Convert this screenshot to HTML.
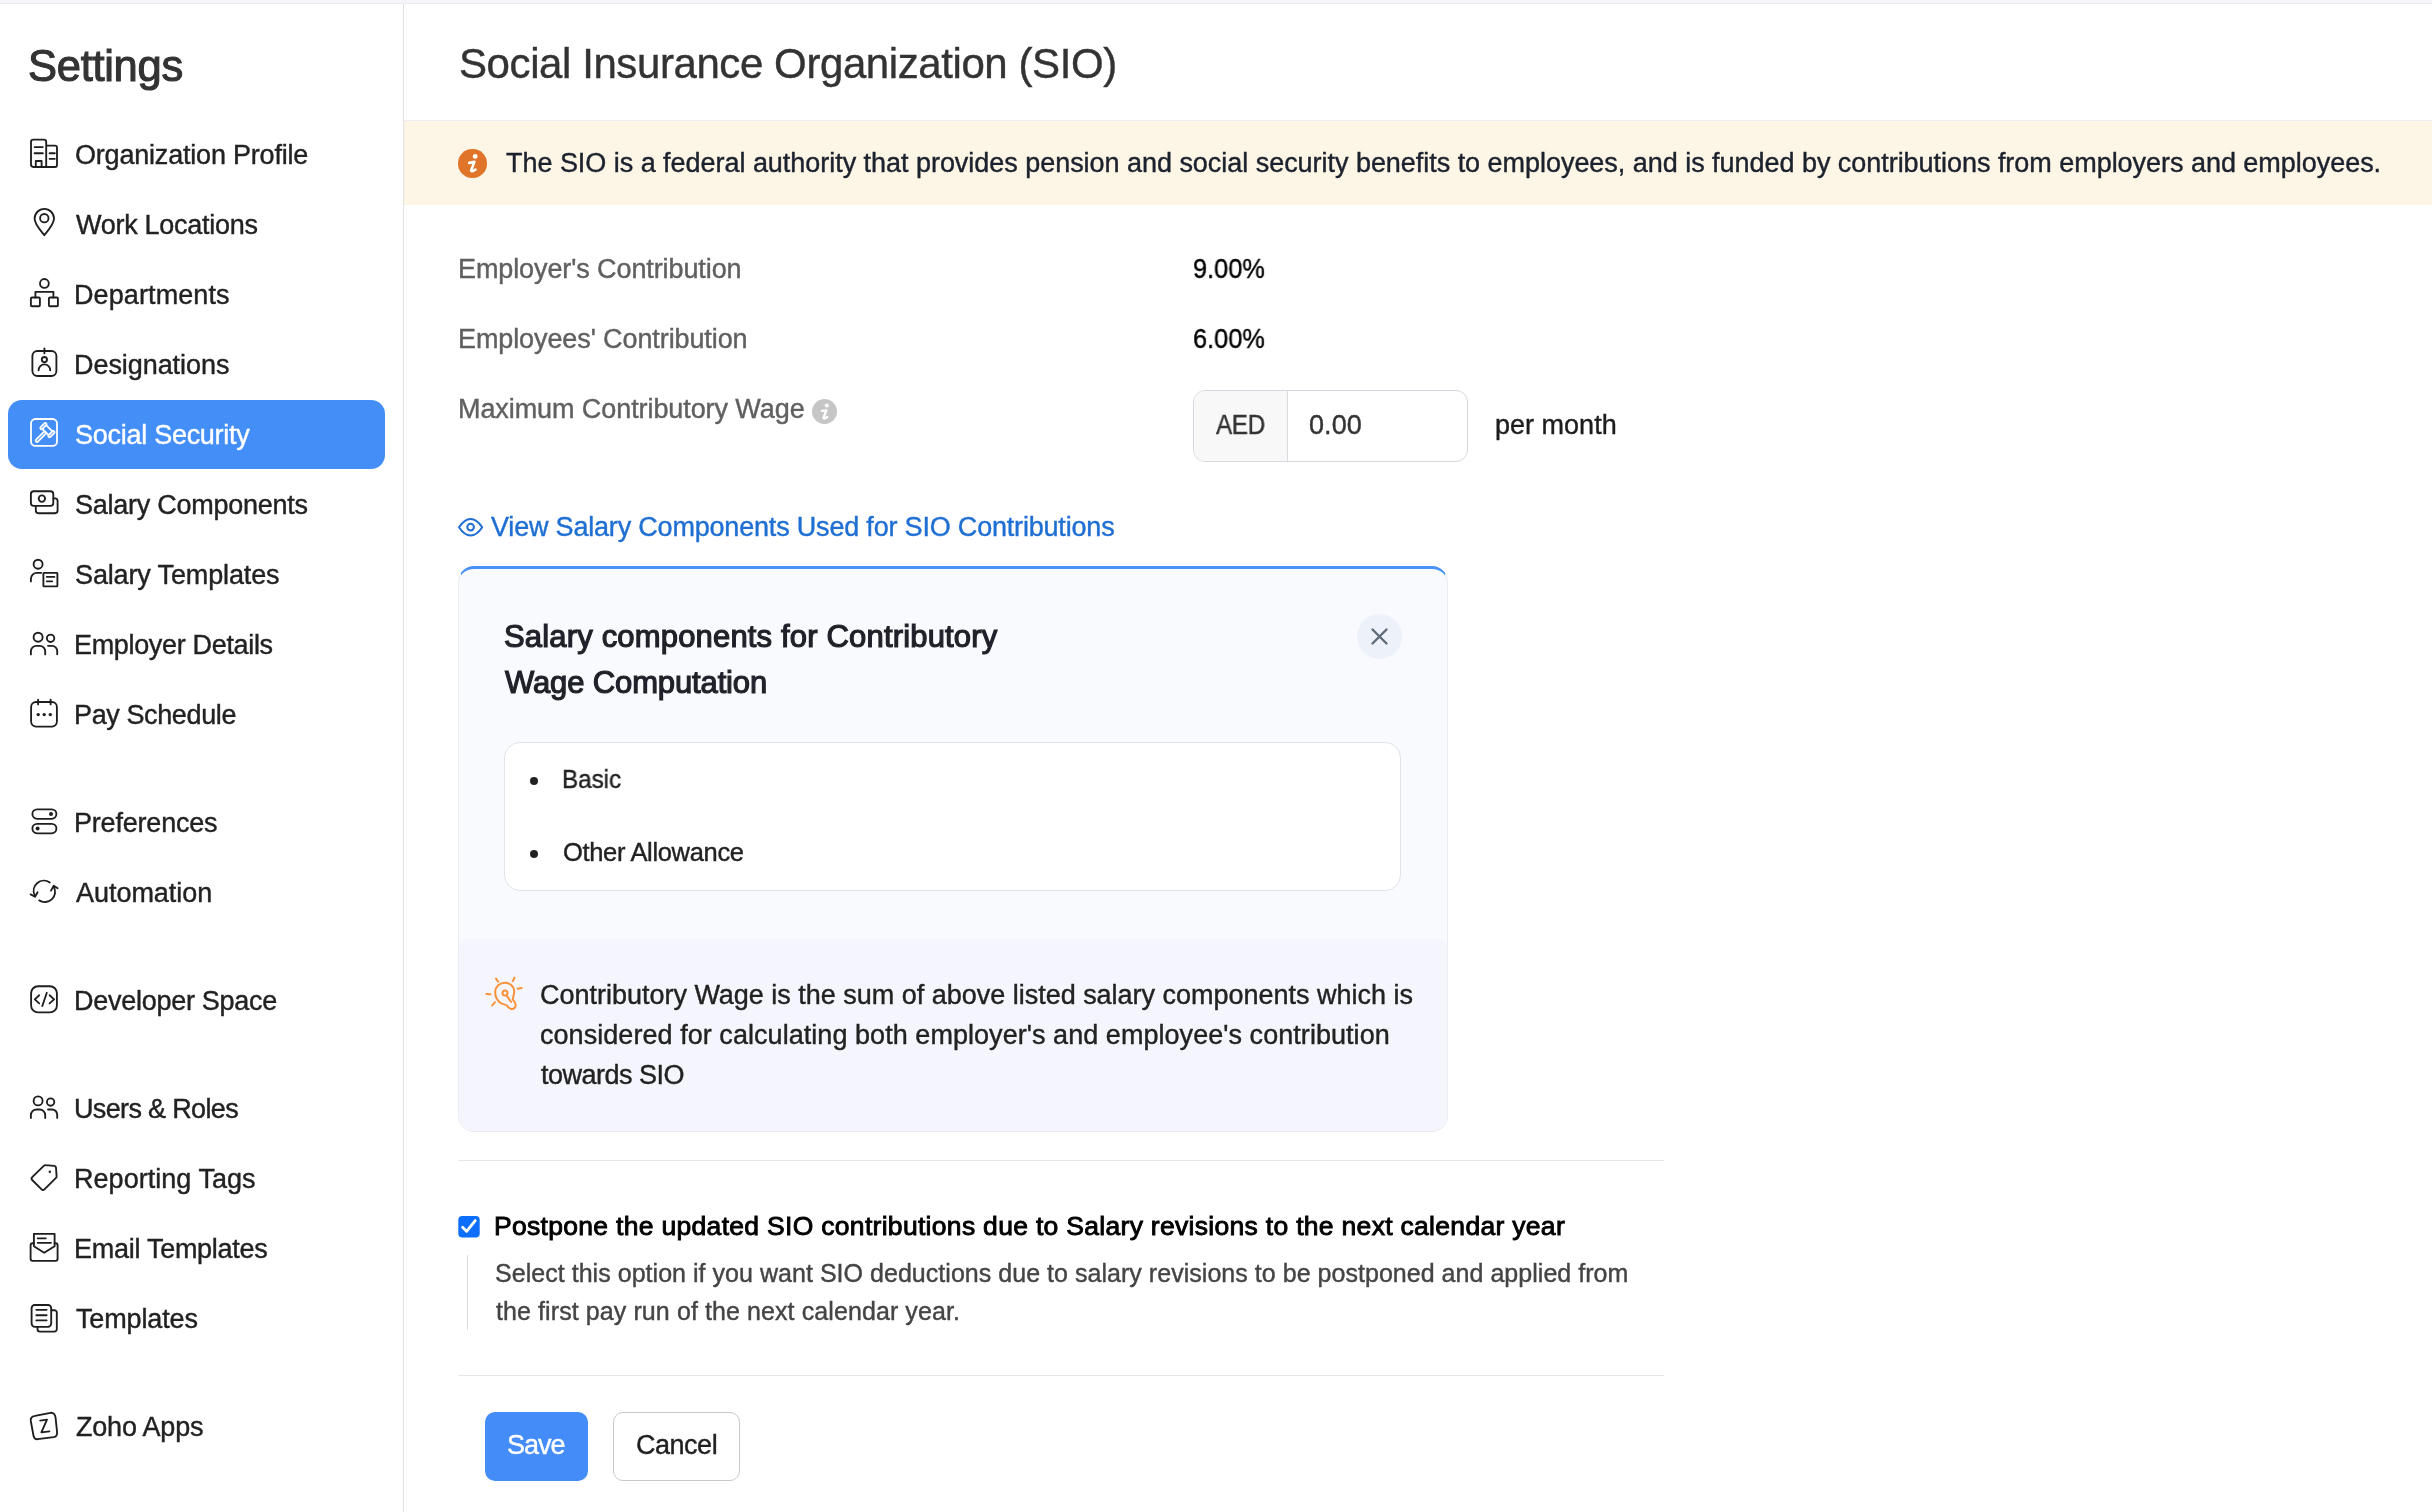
<!DOCTYPE html>
<html><head><meta charset="utf-8"><style>
html,body{margin:0;padding:0;}
body{width:2432px;height:1512px;overflow:hidden;background:#fff;position:relative;font-family:"Liberation Sans",sans-serif;}
@media (max-width:1300px){body{zoom:0.5}}
.t{position:absolute;white-space:pre;line-height:1;font-family:"Liberation Sans",sans-serif;-webkit-font-smoothing:antialiased;will-change:transform;}
</style></head><body>
<div style="position:absolute;left:0;top:0;width:2432px;height:3px;background:#f5f6fd"></div>
<div style="position:absolute;left:0;top:3px;width:2432px;height:1px;background:#ececec"></div>
<div style="position:absolute;left:403px;top:4px;width:1px;height:1508px;background:#e2e2e2"></div>
<div class="t" id="settings" style="left:27.50px;top:45.00px;font-size:43.5px;color:#333;letter-spacing:-0.285px;-webkit-text-stroke:1.1px #333;">Settings</div>
<div style="position:absolute;left:8px;top:400px;width:377px;height:69px;background:#448ef8;border-radius:14px"></div>
<div class="t" id="s_org" style="left:74.60px;top:141.80px;font-size:27px;color:#222;letter-spacing:-0.198px;-webkit-text-stroke:0.4px #222;">Organization Profile</div>
<div class="t" id="s_work" style="left:75.60px;top:211.80px;font-size:27px;color:#222;letter-spacing:-0.278px;-webkit-text-stroke:0.4px #222;">Work Locations</div>
<div class="t" id="s_dept" style="left:73.60px;top:281.80px;font-size:27px;color:#222;letter-spacing:0.1px;-webkit-text-stroke:0.4px #222;">Departments</div>
<div class="t" id="s_desig" style="left:73.60px;top:351.80px;font-size:27px;color:#222;letter-spacing:-0.065px;-webkit-text-stroke:0.4px #222;">Designations</div>
<div class="t" id="s_social" style="left:74.60px;top:421.80px;font-size:27px;color:#fff;letter-spacing:-0.27px;-webkit-text-stroke:0.4px #fff;">Social Security</div>
<div class="t" id="s_salc" style="left:74.60px;top:491.80px;font-size:27px;color:#222;letter-spacing:-0.262px;-webkit-text-stroke:0.4px #222;">Salary Components</div>
<div class="t" id="s_salt" style="left:74.60px;top:561.80px;font-size:27px;color:#222;letter-spacing:-0.133px;-webkit-text-stroke:0.4px #222;">Salary Templates</div>
<div class="t" id="s_emp" style="left:73.60px;top:631.80px;font-size:27px;color:#222;letter-spacing:-0.333px;-webkit-text-stroke:0.4px #222;">Employer Details</div>
<div class="t" id="s_pay" style="left:73.60px;top:701.80px;font-size:27px;color:#222;letter-spacing:-0.383px;-webkit-text-stroke:0.4px #222;">Pay Schedule</div>
<div class="t" id="s_pref" style="left:73.60px;top:809.50px;font-size:27px;color:#222;letter-spacing:-0.2px;-webkit-text-stroke:0.4px #222;">Preferences</div>
<div class="t" id="s_auto" style="left:75.60px;top:879.50px;font-size:27px;color:#222;letter-spacing:-0.032px;-webkit-text-stroke:0.4px #222;">Automation</div>
<div class="t" id="s_dev" style="left:73.60px;top:987.50px;font-size:27px;color:#222;letter-spacing:-0.273px;-webkit-text-stroke:0.4px #222;">Developer Space</div>
<div class="t" id="s_users" style="left:73.60px;top:1095.50px;font-size:27px;color:#222;letter-spacing:-0.657px;-webkit-text-stroke:0.4px #222;">Users &amp; Roles</div>
<div class="t" id="s_tags" style="left:73.60px;top:1165.50px;font-size:27px;color:#222;letter-spacing:0.032px;-webkit-text-stroke:0.4px #222;">Reporting Tags</div>
<div class="t" id="s_email" style="left:73.60px;top:1235.50px;font-size:27px;color:#222;letter-spacing:-0.27px;-webkit-text-stroke:0.4px #222;">Email Templates</div>
<div class="t" id="s_tmpl" style="left:75.60px;top:1305.50px;font-size:27px;color:#222;letter-spacing:-0.135px;-webkit-text-stroke:0.4px #222;">Templates</div>
<div class="t" id="s_zoho" style="left:75.60px;top:1413.50px;font-size:27px;color:#222;letter-spacing:-0.2px;-webkit-text-stroke:0.4px #222;">Zoho Apps</div>
<svg width="404" height="1512" viewBox="0 0 404 1512" style="position:absolute;left:0;top:0" fill="none" stroke="#1e1e1e" stroke-width="1.85" stroke-linecap="round" stroke-linejoin="round"><path d="M46.2 167 V142 a2.4 2.4 0 0 0 -2.4 -2.4 H33.4 a2.4 2.4 0 0 0 -2.4 2.4 V164.6 a2.4 2.4 0 0 0 2.4 2.4 H55 a2 2 0 0 0 2 -2 V147.6 a2 2 0 0 0 -2 -2 H46.2"/><path d="M34.6 147.1 H42.8 M34.6 153.2 H42.8 M49.6 153.2 H54.8 M49.6 158.8 H54.8"/><path d="M35.8 167 V161 H41.6 V167"/><path d="M44.3 235.2 C41 231 34.6 224.5 34.6 218.6 a9.7 9.7 0 0 1 19.4 0 C54 224.5 47.6 231 44.3 235.2 Z"/><circle cx="44.3" cy="218.2" r="4.2"/><circle cx="44.4" cy="283.4" r="4.4"/><path d="M35.4 297.4 V291.8 H53.4 V297.4"/><rect x="30.9" y="297.5" width="9" height="8.7" rx="1"/><rect x="48.9" y="297.5" width="9" height="8.7" rx="1"/><rect x="32.4" y="351" width="24" height="25" rx="5"/><path d="M44.4 348.4 V353.4"/><circle cx="44.4" cy="359.6" r="2.6"/><path d="M38.6 370.2 a5.8 5.8 0 0 1 11.6 0"/><rect x="30.9" y="491.2" width="22.4" height="14.6" rx="2.8"/><circle cx="41.9" cy="498.6" r="3.2"/><path d="M53.4 498.4 H55 a2.6 2.6 0 0 1 2.6 2.6 V510.6 a2.6 2.6 0 0 1 -2.6 2.6 H38.4 a2.6 2.6 0 0 1 -2.6 -2.6 V505.8"/><circle cx="38.1" cy="564.2" r="4.5"/><path d="M30.9 581.4 V578.8 a6 6 0 0 1 6 -6 H41.2"/><rect x="43.4" y="572.8" width="14" height="13.6" rx="0.6"/><path d="M46.8 576.9 H54.4 M46.8 581.3 H52.2"/><circle cx="38.1" cy="637.2" r="4.5"/><path d="M30.9 654.4 V651.4 a5.6 5.6 0 0 1 5.6 -5.6 H39.6 a5.6 5.6 0 0 1 5.6 5.6 V654.4"/><circle cx="50.6" cy="638.3" r="3.7"/><path d="M48 645.8 H52 a5.2 5.2 0 0 1 5.2 5.2 V654.2"/><rect x="31.1" y="702" width="25.8" height="24.6" rx="5"/><path d="M38.1 699.6 V704.4 M50.6 699.6 V704.4"/><g fill="#1e1e1e" stroke="none"><circle cx="38.2" cy="714.6" r="1.7"/><circle cx="44.2" cy="714.6" r="1.7"/><circle cx="50.3" cy="714.6" r="1.7"/></g><rect x="32.4" y="809.4" width="24" height="9.4" rx="4.7"/><rect x="32.4" y="823.9" width="24" height="9.4" rx="4.7"/><g fill="#1e1e1e" stroke="none"><circle cx="51" cy="814.1" r="2"/><circle cx="37.6" cy="828.6" r="2"/></g><path d="M49.8 882.4 A10.3 10.3 0 0 0 34.6 895.2"/><path d="M30.6 894.4 L35 896.8 L37.6 892.2"/><path d="M39.2 900.4 A10.3 10.3 0 0 0 53.6 886.4"/><path d="M51 890.6 L53.8 885.8 L57.6 888.2"/><rect x="31.1" y="986.2" width="25.8" height="26.2" rx="7"/><path d="M39.2 995.3 L34.8 999.4 L39.2 1003.4 M49.6 995.3 L54.1 999.4 L49.6 1003.4 M46.8 992.8 L42.3 1006"/><circle cx="38.1" cy="1100.9" r="4.5"/><path d="M30.9 1118.1 V1115.1 a5.6 5.6 0 0 1 5.6 -5.6 H39.6 a5.6 5.6 0 0 1 5.6 5.6 V1118.1"/><circle cx="50.6" cy="1102.0" r="3.7"/><path d="M48 1109.5 H52 a5.2 5.2 0 0 1 5.2 5.2 V1117.9"/><path d="M45.6 1165.2 L54.2 1165.8 a2 2 0 0 1 1.8 1.8 L56.6 1176.2 a2 2 0 0 1 -0.6 1.6 L44.4 1189.4 a2 2 0 0 1 -2.8 0 L32.2 1180 a2 2 0 0 1 0 -2.8 L43.8 1165.8 a2 2 0 0 1 1.8 -0.6 Z"/><circle cx="49.8" cy="1171.8" r="1.2" fill="#1e1e1e" stroke="none"/><path d="M33.9 1243.2 H32.6 a2 2 0 0 0 -2 2 V1258.8 a2 2 0 0 0 2 2 H55.6 a2 2 0 0 0 2 -2 V1245.2 a2 2 0 0 0 -2 -2 H54.6"/><path d="M33.9 1246.2 V1233.8 H54.6 V1246.2 L44.2 1252.8 Z"/><path d="M37.7 1238.3 H45.8 M37.7 1242.8 H51"/><rect x="31.6" y="1305" width="19.6" height="21.8" rx="3.2"/><path d="M36.3 1309.8 H46.6 M36.3 1315.2 H46.6 M36.3 1320.4 H46.6"/><path d="M51.4 1310.2 H54.4 a2.4 2.4 0 0 1 2.4 2.4 V1329.2 a2.4 2.4 0 0 1 -2.4 2.4 H39.9 a2.4 2.4 0 0 1 -2.4 -2.4 V1326.8"/><path d="M35 1415.9 L50.5 1412.8 C53.5 1412.4 55.2 1414.6 55.6 1417.9 L57.1 1432.4 C57.3 1435 56 1436.8 53.6 1437.2 L37.6 1439.2 C35.2 1439.4 33.9 1437.8 33.5 1435.8 L30.8 1421 C30.4 1418.4 32 1416.4 35 1415.9 Z"/><path d="M40.2 1420.6 L47 1419.6 L41.4 1432.4 L49.4 1431.4"/></svg>
<svg width="404" height="1512" viewBox="0 0 404 1512" style="position:absolute;left:0;top:0" fill="none" stroke="#fff" stroke-width="1.8" stroke-linecap="round" stroke-linejoin="round"><rect x="31" y="419" width="26" height="26.8" rx="4.4"/><g transform="translate(47.4 430.2) rotate(45)"><rect x="-6.9" y="-3.9" width="2.5" height="7.8" rx="1.25"/><rect x="4.4" y="-3.9" width="2.5" height="7.8" rx="1.25"/><path d="M-4.4 -2.7 H4.4 M-4.4 2.7 H4.4"/><rect x="-1.3" y="2.7" width="2.6" height="13.3" rx="1.3"/></g></svg>
<div class="t" id="title" style="left:458.50px;top:43.00px;font-size:42px;color:#333;letter-spacing:-0.415px;-webkit-text-stroke:0.4px #333;">Social Insurance Organization (SIO)</div>
<div style="position:absolute;left:404px;top:120px;width:2028px;height:1px;background:#eceef2"></div>
<div style="position:absolute;left:404px;top:121px;width:2028px;height:84px;background:#fdf5e6"></div>
<div style="position:absolute;left:458px;top:149px;width:28.5px;height:28.5px;border-radius:50%;background:#e07428"></div>
<div class="t" id="banner" style="left:505.50px;top:149.80px;font-size:27px;color:#1b212d;letter-spacing:-0.035px;-webkit-text-stroke:0.4px #1b212d;">The SIO is a federal authority that provides pension and social security benefits to employees, and is funded by contributions from employers and employees.</div>
<div class="t" id="lab1" style="left:457.50px;top:256.00px;font-size:27px;color:#606060;letter-spacing:-0.101px;-webkit-text-stroke:0.4px #606060;">Employer's Contribution</div>
<div class="t" id="lab2" style="left:457.50px;top:326.00px;font-size:27px;color:#606060;letter-spacing:-0.101px;-webkit-text-stroke:0.4px #606060;">Employees' Contribution</div>
<div class="t" id="lab3" style="left:458.00px;top:396.20px;font-size:27px;color:#606060;letter-spacing:-0.081px;-webkit-text-stroke:0.4px #606060;">Maximum Contributory Wage</div>
<div style="position:absolute;left:812px;top:399px;width:25px;height:25px;border-radius:50%;background:#c6c6c6"></div>
<div class="t" id="val1" style="left:1193.20px;top:256.00px;font-size:27px;color:#000;letter-spacing:0.05px;-webkit-text-stroke:0.4px #000;transform:scaleX(0.936);transform-origin:0 0;">9.00%</div>
<div class="t" id="val2" style="left:1193.20px;top:326.00px;font-size:27px;color:#000;letter-spacing:0.05px;-webkit-text-stroke:0.4px #000;transform:scaleX(0.936);transform-origin:0 0;">6.00%</div>
<div style="position:absolute;left:1193px;top:390px;width:273px;height:70px;border:1px solid #d5d8df;border-radius:12px;background:#fff;overflow:hidden"><div style="position:absolute;left:0;top:0;width:93px;height:70px;background:#f8f8f9;border-right:1px solid #d9dbe1"></div></div>
<div class="t" id="aed" style="left:1216.20px;top:412.30px;font-size:27px;color:#333;letter-spacing:-0.4px;-webkit-text-stroke:0.4px #333;transform:scaleX(0.9);transform-origin:0 0;">AED</div>
<div class="t" id="zero" style="left:1309.00px;top:412.30px;font-size:27px;color:#333;letter-spacing:0.066px;-webkit-text-stroke:0.4px #333;">0.00</div>
<div class="t" id="permonth" style="left:1494.80px;top:412.30px;font-size:27px;color:#1d1d1d;letter-spacing:0.015px;-webkit-text-stroke:0.4px #1d1d1d;">per month</div>
<div class="t" id="link" style="left:490.60px;top:513.80px;font-size:27px;color:#1f6fd3;letter-spacing:-0.191px;-webkit-text-stroke:0.4px #1f6fd3;">View Salary Components Used for SIO Contributions</div>
<div style="position:absolute;left:458px;top:566px;width:988px;height:562px;border:1px solid #ebedf2;border-top:3px solid #4791f7;border-radius:16px;background:#f9fafd;overflow:hidden"><div style="position:absolute;left:0;top:370px;width:988px;height:194px;background:#f5f6fd;border-radius:8px 8px 0 0"></div></div>
<div class="t" id="ptitle1" style="left:504.20px;top:621.10px;font-size:31px;color:#1f2229;letter-spacing:0.17px;-webkit-text-stroke:1.2px #1f2229;">Salary components for Contributory</div>
<div class="t" id="ptitle2" style="left:505.20px;top:666.60px;font-size:31px;color:#1f2229;letter-spacing:-0.133px;-webkit-text-stroke:1.2px #1f2229;">Wage Computation</div>
<div style="position:absolute;left:1357px;top:614px;width:45px;height:45px;border-radius:50%;background:#edf1f9"></div>
<div style="position:absolute;left:504px;top:742px;width:895px;height:147px;background:#fff;border:1px solid #e1e3ea;border-radius:16px"></div>
<div style="position:absolute;left:530px;top:777px;width:8px;height:8px;border-radius:50%;background:#222"></div>
<div style="position:absolute;left:530px;top:850px;width:8px;height:8px;border-radius:50%;background:#222"></div>
<div class="t" id="basic" style="left:561.60px;top:767.00px;font-size:25.5px;color:#222;letter-spacing:-0.025px;-webkit-text-stroke:0.4px #222;transform:scaleX(0.95);transform-origin:0 0;">Basic</div>
<div class="t" id="other" style="left:562.60px;top:840.00px;font-size:25.5px;color:#222;letter-spacing:-0.335px;-webkit-text-stroke:0.4px #222;">Other Allowance</div>
<div class="t" id="tip1" style="left:540.20px;top:981.90px;font-size:27px;color:#222;letter-spacing:-0.014px;-webkit-text-stroke:0.4px #222;">Contributory Wage is the sum of above listed salary components which is</div>
<div class="t" id="tip2" style="left:540.20px;top:1022.30px;font-size:27px;color:#222;letter-spacing:0.05px;-webkit-text-stroke:0.4px #222;">considered for calculating both employer's and employee's contribution</div>
<div class="t" id="tip3" style="left:541.20px;top:1061.80px;font-size:27px;color:#222;letter-spacing:-0.5px;-webkit-text-stroke:0.4px #222;">towards SIO</div>
<div style="position:absolute;left:458px;top:1160px;width:1206px;height:1px;background:#e6e6e6"></div>
<div class="t" id="cblabel" style="left:493.80px;top:1213.00px;font-size:26.5px;color:#000;letter-spacing:0.302px;-webkit-text-stroke:0.9px #000;">Postpone the updated SIO contributions due to Salary revisions to the next calendar year</div>
<div style="position:absolute;left:467px;top:1255px;width:1px;height:75px;background:#dcdcdc"></div>
<div class="t" id="desc1" style="left:494.80px;top:1261.00px;font-size:25px;color:#444;letter-spacing:0.035px;-webkit-text-stroke:0.4px #444;">Select this option if you want SIO deductions due to salary revisions to be postponed and applied from</div>
<div class="t" id="desc2" style="left:495.80px;top:1299.00px;font-size:25px;color:#444;letter-spacing:0.091px;-webkit-text-stroke:0.4px #444;">the first pay run of the next calendar year.</div>
<div style="position:absolute;left:458px;top:1375px;width:1206px;height:1px;background:#e6e6e6"></div>
<div style="position:absolute;left:485px;top:1412px;width:103px;height:69px;background:#448cf8;border-radius:10px"></div>
<div class="t" id="save" style="left:507.40px;top:1432.00px;font-size:27px;color:#fff;letter-spacing:-1.0px;-webkit-text-stroke:0.4px #fff;">Save</div>
<div style="position:absolute;left:613px;top:1412px;width:125px;height:67px;border:1px solid #c9c9c9;border-radius:10px;background:#fff"></div>
<div class="t" id="cancel" style="left:636.00px;top:1432.00px;font-size:27px;color:#1f1f1f;letter-spacing:-0.48px;-webkit-text-stroke:0.4px #1f1f1f;">Cancel</div>
<svg width="2432" height="1512" viewBox="0 0 2432 1512" style="position:absolute;left:0;top:0" fill="none" stroke-linecap="round" stroke-linejoin="round"><circle cx="475.2" cy="156.4" r="2.4" fill="#fff"/><path d="M469.2 162.9 L474.4 161.9 L471.2 170.2 C470.8 171.6 472.4 171.8 475.4 169.6" stroke="#fff" stroke-width="2.6"/><circle cx="826.8" cy="405.6" r="2" fill="#fff"/><path d="M821.8 410.9 L826.4 410.4 L823.6 417.4 C823.2 418.8 824.6 419 827.2 417" stroke="#fff" stroke-width="2.3"/><path d="M459 527.3 C462.5 522 466.5 519 470.6 519 C474.7 519 478.7 522 482.2 527.3 C478.7 532.6 474.7 535.6 470.6 535.6 C466.5 535.6 462.5 532.6 459 527.3 Z" stroke="#1f6fd3" stroke-width="2"/><circle cx="470.6" cy="527.1" r="3.3" stroke="#1f6fd3" stroke-width="2"/><path d="M1372.5 629.5 L1386.5 643.5 M1386.5 629.5 L1372.5 643.5" stroke="#5f6b7a" stroke-width="2.4"/><g stroke="#f7913a" stroke-width="2"><path d="M500.8 1003.2 C497 1000.5 495 996.5 495.2 991.6 C495.6 986.4 499.8 982.8 505 982.8 C510.2 982.8 514.2 986.6 514.2 991.6 C514.2 994.8 513 997 512.8 999.6 C514.8 1001.6 515.8 1003.4 515.6 1005.4 C515.4 1007.6 513.6 1009 511.4 1008.9 C509.4 1008.8 508.2 1007.4 507 1005.6 C505.4 1004.4 503 1004.4 500.8 1003.2 Z"/><circle cx="505" cy="993" r="2.5"/><path d="M506.6 995.6 L511.2 1002"/><path d="M486.4 993.9 L490.4 994.3 M496 978.6 L498.2 981.8 M514.4 977.6 L512.8 981.2 M517.6 988.8 L521.6 988 M492.2 1005.4 L495 1002.2"/></g><rect x="458.3" y="1216" width="21.4" height="21.6" rx="4" fill="#0b6efd" stroke="none"/><path d="M462.6 1227.2 L466.6 1231.4 L475.2 1220.6" stroke="#fff" stroke-width="2.8"/></svg>
</body></html>
